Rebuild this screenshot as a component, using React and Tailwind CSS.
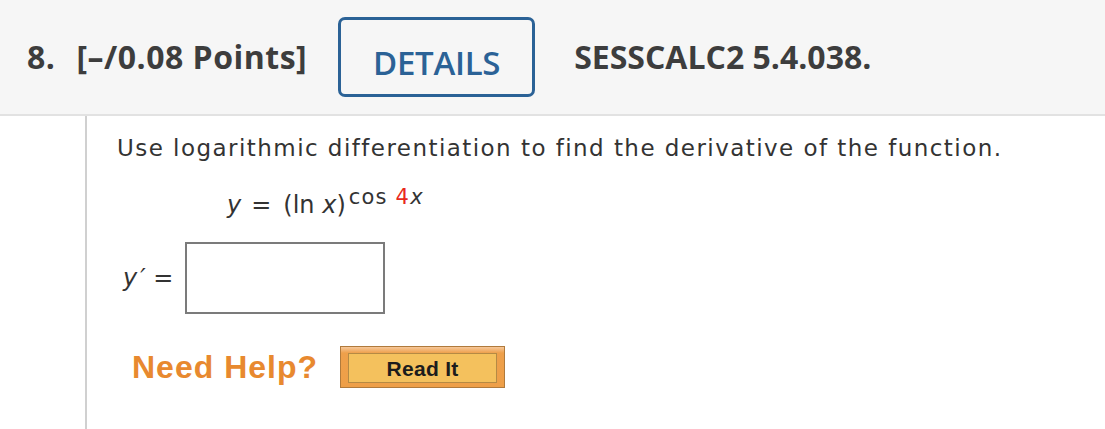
import React from 'react';

const App = () => {
    return (
        <div className="w-[1105px] h-[429px] bg-white overflow-hidden flex flex-col">
            {/* Question header */}
            <div className="h-[116px] shrink-0 bg-[#f6f6f6] border-b-2 border-[#e2e2e2] flex items-start text-[#3d3d3d] font-bold" style={{ fontFamily: "'Open Sans', sans-serif" }}>
                <div className="flex items-center h-[114px] pl-[27px] text-[32px] tracking-[0.5px]">
                    <span>8.</span>
                    <span className="ml-[21px]">[–/0.08 Points]</span>
                </div>
                <div className="ml-[31px] mt-[17px] w-[197px] h-[80px] border-[3px] border-[#2b6296] rounded-[7px] flex items-end justify-center pb-[7px] text-[#2b6296] text-[33px] font-semibold tracking-[-0.3px]">
                    DETAILS
                </div>
                <div className="flex items-center h-[114px] ml-[39px] text-[32px] tracking-[0px]">
                    SESSCALC2 5.4.038.
                </div>
            </div>

            {/* Question body */}
            <div className="flex-1 ml-[85px] border-l-2 border-[#d0d0d0] pl-[30px] pt-[18px] text-[#333333]" style={{ fontFamily: "'DejaVu Sans', Verdana, sans-serif" }}>
                <p className="text-[23px] leading-[28px] tracking-[1.45px] whitespace-nowrap">
                    Use logarithmic differentiation to find the derivative of the function.
                </p>
                <p className="mt-[20px] ml-[110px] text-[24px] leading-[30px] whitespace-nowrap">
                    <span className="italic">y</span>
                    <span className="ml-[10px]">=</span>
                    <span className="ml-[12px]">(ln <span className="italic">x</span>)</span>
                    <span className="ml-[3px] text-[21px] align-[9px] tracking-[1.2px]">
                        cos <span className="text-[#e8291c]">4</span><span className="italic">x</span>
                    </span>
                </p>

                <div className="mt-[22px] flex items-center">
                    <span className="ml-[6px] text-[24px] whitespace-nowrap"><span className="italic">y</span><span className="italic ml-[3px]">′</span> =</span>
                    <div className="ml-[12px] w-[200px] h-[72px] border-2 border-[#7b7b7b] bg-white"></div>
                </div>

                <div className="mt-[29px] flex items-center">
                    <span className="ml-[15px] text-[32px] font-bold text-[#e8892f] tracking-[1px]" style={{ fontFamily: "'Liberation Sans', Arial, sans-serif" }}>
                        Need Help?
                    </span>
                    <button type="button" className="ml-[22px] w-[165px] h-[42px] border border-[#b07a3c] bg-[linear-gradient(to_bottom,#f6c79a_0px,#eea04b_6px,#ee9f48_100%)] flex pt-[6px] pb-[4px] px-[7px]">
                        <span className="w-full h-full border border-[#b58a44] bg-[#f4c15d] flex items-center justify-center pt-[1px] text-[21px] font-bold text-[#1c1c1c] tracking-[0.3px]" style={{ fontFamily: "'Liberation Sans', Arial, sans-serif" }}>
                            Read It
                        </span>
                    </button>
                </div>
            </div>
        </div>
    );
};

export default App;
